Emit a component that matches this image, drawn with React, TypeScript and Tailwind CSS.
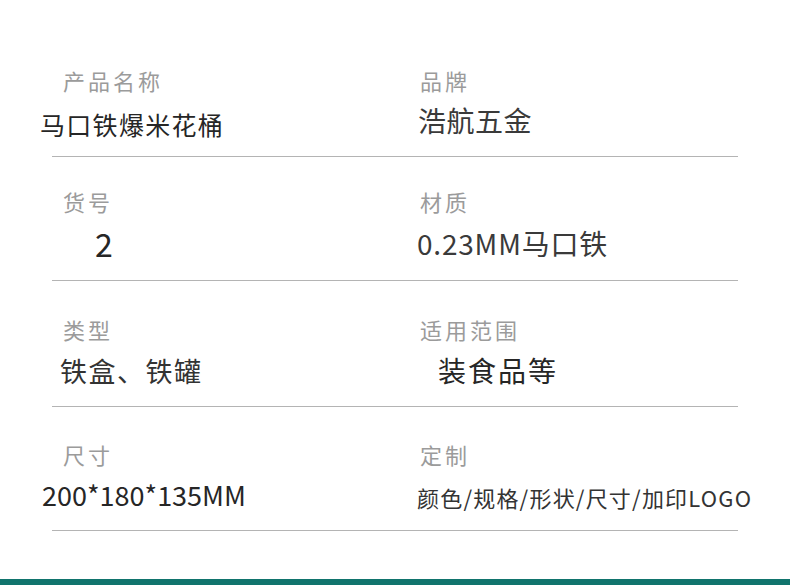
import React from "react";

const font = { fontFamily: '"Noto Sans CJK SC", "Noto Sans", sans-serif' };

function Label({ text, pl, mt }: { text: string; pl: string; mt: string }) {
  return (
    <div className={`${pl} ${mt} text-[22px] leading-none tracking-[3px] text-[#9b9b9b] whitespace-nowrap`}>{text}</div>
  );
}

function Line() {
  return <div className="ml-[52px] h-px w-[686px] bg-[#b4b4b4]" />;
}

export default function App() {
  return (
    <div className="flex h-[585px] w-[790px] flex-col bg-white" style={font}>
      {/* Row 1 */}
      <div className="grid h-[156px] grid-cols-[390px_400px]">
        <div className="flex flex-col">
          <Label text="产品名称" pl="pl-[63px]" mt="mt-[69px]" />
          <div className="mt-[21px] pl-[40px] text-[25px] leading-none tracking-[1.3px] text-[#262626] whitespace-nowrap">马口铁爆米花桶</div>
        </div>
        <div className="flex flex-col">
          <Label text="品牌" pl="pl-[30px]" mt="mt-[69px]" />
          <div className="mt-[15px] pl-[28px] text-[28px] leading-none tracking-[0.5px] text-[#3a3a3a] whitespace-nowrap">浩航五金</div>
        </div>
      </div>
      <Line />
      {/* Row 2 */}
      <div className="grid h-[123px] grid-cols-[390px_400px]">
        <div className="flex flex-col">
          <Label text="货号" pl="pl-[63px]" mt="mt-[33px]" />
          <div className="mt-[15px] pl-[95px] text-[32px] leading-none text-[#262626] whitespace-nowrap">2</div>
        </div>
        <div className="flex flex-col">
          <Label text="材质" pl="pl-[30px]" mt="mt-[33px]" />
          <div className="mt-[17px] pl-[27px] text-[28px] leading-none tracking-[0.8px] text-[#3a3a3a] whitespace-nowrap">0.23MM马口铁</div>
        </div>
      </div>
      <Line />
      {/* Row 3 */}
      <div className="grid h-[125px] grid-cols-[390px_400px]">
        <div className="flex flex-col">
          <Label text="类型" pl="pl-[63px]" mt="mt-[37px]" />
          <div className="mt-[17px] pl-[60px] text-[27px] leading-none tracking-[1.5px] text-[#333333] whitespace-nowrap">铁盒、铁罐</div>
        </div>
        <div className="flex flex-col">
          <Label text="适用范围" pl="pl-[30px]" mt="mt-[37px]" />
          <div className="mt-[16px] pl-[48px] text-[28px] leading-none tracking-[2px] text-[#262626] whitespace-nowrap">装食品等</div>
        </div>
      </div>
      <Line />
      {/* Row 4 */}
      <div className="grid h-[123px] grid-cols-[390px_400px]">
        <div className="flex flex-col">
          <Label text="尺寸" pl="pl-[63px]" mt="mt-[36px]" />
          <div className="mt-[16px] pl-[42px] text-[27px] leading-none text-[#262626] whitespace-nowrap">200*180*135MM</div>
        </div>
        <div className="flex flex-col">
          <Label text="定制" pl="pl-[30px]" mt="mt-[36px]" />
          <div className="mt-[21px] pl-[27px] text-[22px] leading-none tracking-[1.2px] text-[#333333] whitespace-nowrap">颜色/规格/形状/尺寸/加印LOGO</div>
        </div>
      </div>
      <Line />
      <div className="flex-1" />
      <div className="h-[6px] w-full bg-[#11746d]" />
    </div>
  );
}
